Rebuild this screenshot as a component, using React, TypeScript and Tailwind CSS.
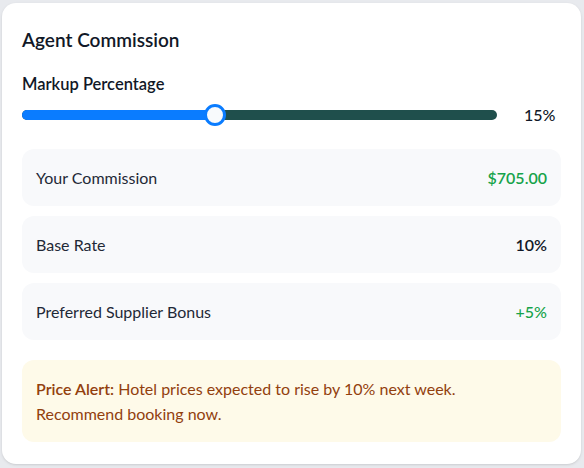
import React from 'react';

const rows = [
  { label: 'Your Commission', value: '$705.00', valueClass: 'text-[#16a34a] font-semibold' },
  { label: 'Base Rate', value: '10%', valueClass: 'text-[#111827] font-semibold' },
  { label: 'Preferred Supplier Bonus', value: '+5%', valueClass: 'text-[#16a34a] font-medium' },
];

const App: React.FC = () => {
  return (
    <div
      className="w-[584px] h-[468px] bg-[#e8eaee] pt-[3px] pl-[2px] pr-[3px] pb-[4px]"
      style={{ fontFamily: '"Lato", "Noto Sans", sans-serif' }}
    >
      <div className="h-full bg-white rounded-[14px] px-5 pt-[23px] shadow-sm">
        {/* Header */}
        <h2 className="text-[19px] leading-7 font-semibold text-[#111827]">Agent Commission</h2>

        <div className="mt-[18px] text-[16.5px] leading-6 font-semibold text-[#111827]">Markup Percentage</div>

        {/* Slider */}
        <div className="mt-[7px] h-6 flex items-center">
          <div className="relative w-[475px] h-[10px] rounded-full bg-[#1f4f4c]">
            <div className="h-full w-[193px] rounded-full bg-[#0a7cff]" />
            <div className="absolute left-[182px] top-[-6px] w-[22px] h-[22px] rounded-full bg-[#f8fafc] border-[3px] border-[#0a7cff]" />
          </div>
          <span className="ml-[27px] text-base font-medium text-[#111827]">15%</span>
        </div>

        {/* Stats */}
        <div className="mt-[22px] flex flex-col gap-[10px]">
          {rows.map((row) => (
            <div
              key={row.label}
              className="h-[57px] rounded-xl bg-[#f8f9fb] px-[14px] flex items-center justify-between text-base"
            >
              <span className="text-[#1f2937]">{row.label}</span>
              <span className={row.valueClass}>{row.value}</span>
            </div>
          ))}
        </div>

        {/* Alert */}
        <div className="mt-5 rounded-xl bg-[#fefae9] px-[14px] py-4 text-base leading-[25px] text-[#92400e]">
          <span className="font-semibold">Price Alert:</span> Hotel prices expected to rise by 10% next week.
          <br />
          Recommend booking now.
        </div>
      </div>
    </div>
  );
};

export default App;
